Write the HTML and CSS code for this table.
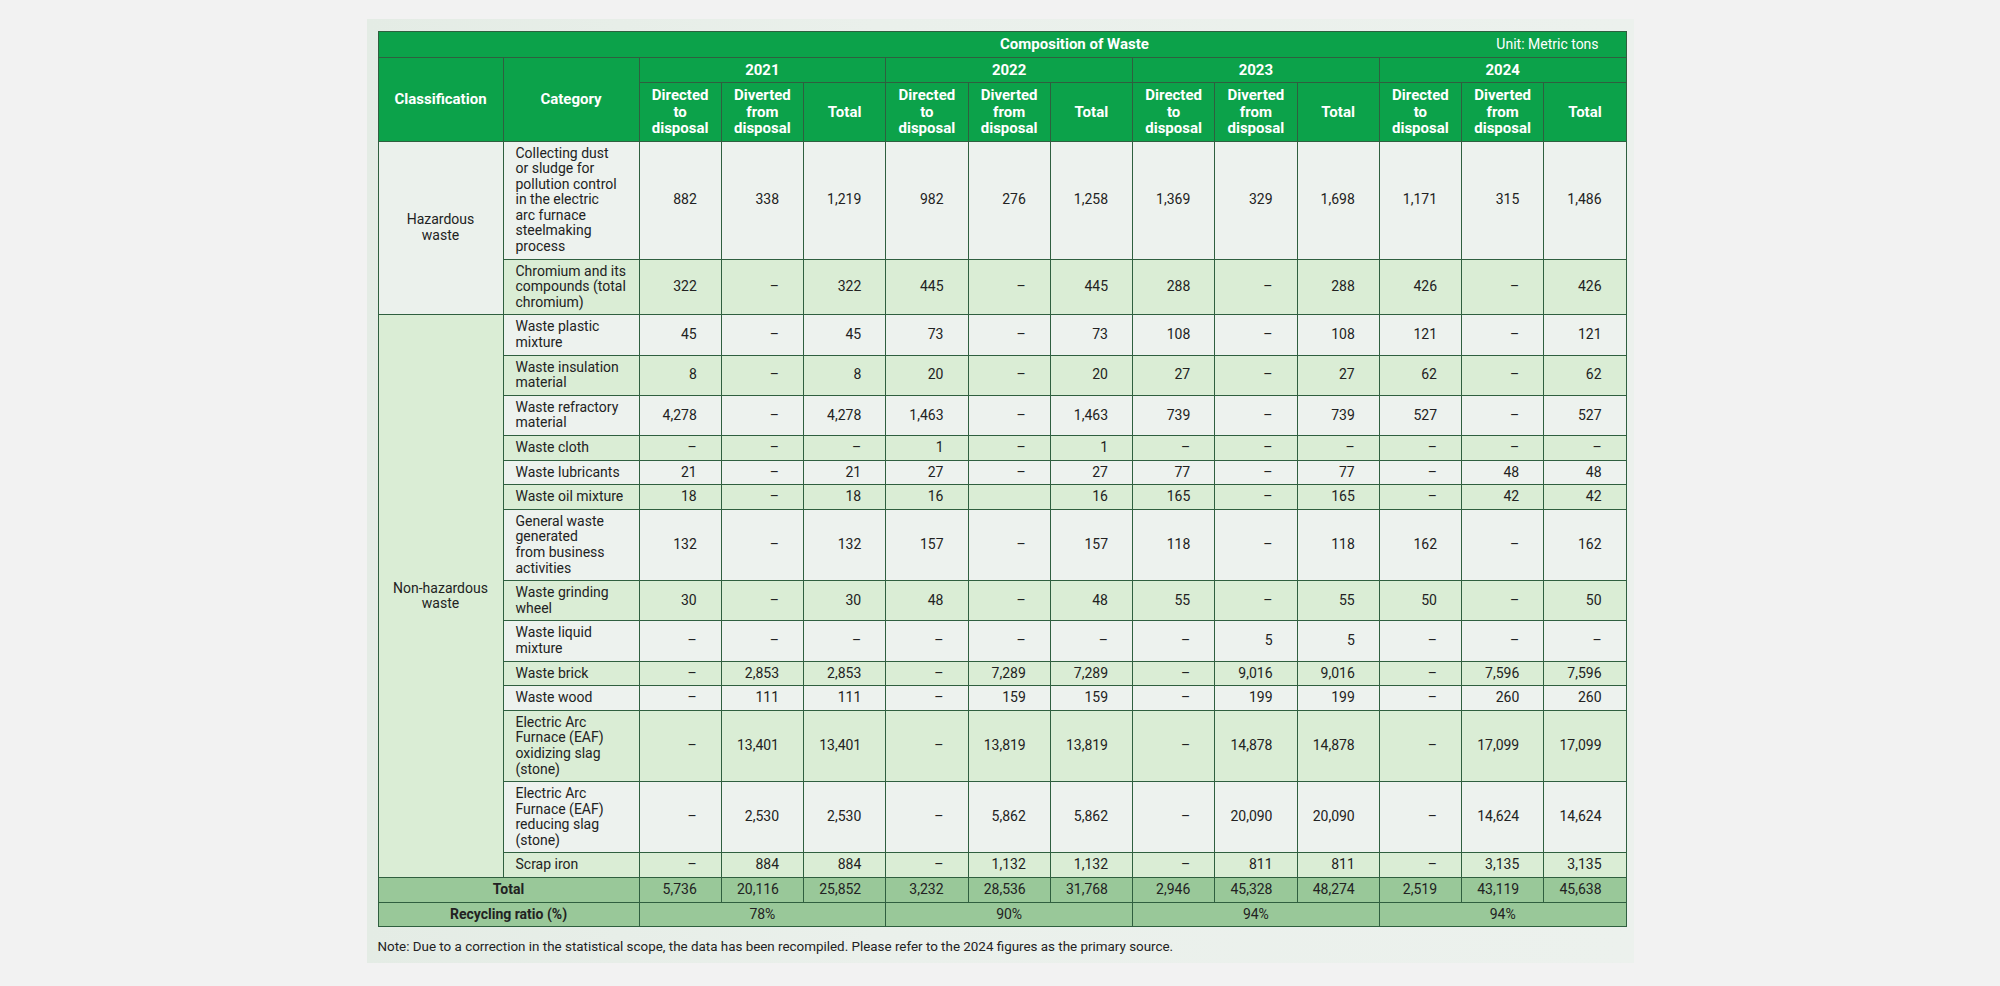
FILE: index.html
```html
<!DOCTYPE html>
<html lang="en">
<head>
<meta charset="utf-8">
<title>Composition of Waste</title>
<link rel="stylesheet" href="styles.css">
</head>
<body>
<div class="panel">
<table class="waste">
<colgroup>
<col class="c-class"><col class="c-cat">
<col class="c-num"><col class="c-num"><col class="c-num">
<col class="c-num"><col class="c-num"><col class="c-num">
<col class="c-num"><col class="c-num"><col class="c-num">
<col class="c-num"><col class="c-num"><col class="c-num">
</colgroup>
<thead>
<tr><th colspan="14" class="title-cell"><div class="title-bar"><span class="title">Composition of Waste</span><span class="unit">Unit: Metric tons</span></div></th></tr>
<tr>
<th rowspan="2">Classification</th>
<th rowspan="2">Category</th>
<th colspan="3">2021</th><th colspan="3">2022</th><th colspan="3">2023</th><th colspan="3">2024</th>
</tr>
<tr>
<th>Directed<br>to<br>disposal</th><th>Diverted<br>from<br>disposal</th><th>Total</th>
<th>Directed<br>to<br>disposal</th><th>Diverted<br>from<br>disposal</th><th>Total</th>
<th>Directed<br>to<br>disposal</th><th>Diverted<br>from<br>disposal</th><th>Total</th>
<th>Directed<br>to<br>disposal</th><th>Diverted<br>from<br>disposal</th><th>Total</th>
</tr>
</thead>
<tbody>
<tr class="lt">
<td rowspan="2" class="cls lt">Hazardous<br>waste</td>
<td class="cat">Collecting dust<br>or sludge for<br>pollution control<br>in the electric<br>arc furnace<br>steelmaking<br>process</td>
<td>882</td><td>338</td><td>1,219</td><td>982</td><td>276</td><td>1,258</td><td>1,369</td><td>329</td><td>1,698</td><td>1,171</td><td>315</td><td>1,486</td>
</tr>
<tr class="gr">
<td class="cat">Chromium and its<br>compounds (total<br>chromium)</td>
<td>322</td><td>–</td><td>322</td><td>445</td><td>–</td><td>445</td><td>288</td><td>–</td><td>288</td><td>426</td><td>–</td><td>426</td>
</tr>
<tr class="lt">
<td rowspan="14" class="cls gr">Non-hazardous<br>waste</td>
<td class="cat">Waste plastic<br>mixture</td>
<td>45</td><td>–</td><td>45</td><td>73</td><td>–</td><td>73</td><td>108</td><td>–</td><td>108</td><td>121</td><td>–</td><td>121</td>
</tr>
<tr class="gr">
<td class="cat">Waste insulation<br>material</td>
<td>8</td><td>–</td><td>8</td><td>20</td><td>–</td><td>20</td><td>27</td><td>–</td><td>27</td><td>62</td><td>–</td><td>62</td>
</tr>
<tr class="lt">
<td class="cat">Waste refractory<br>material</td>
<td>4,278</td><td>–</td><td>4,278</td><td>1,463</td><td>–</td><td>1,463</td><td>739</td><td>–</td><td>739</td><td>527</td><td>–</td><td>527</td>
</tr>
<tr class="gr">
<td class="cat">Waste cloth</td>
<td>–</td><td>–</td><td>–</td><td>1</td><td>–</td><td>1</td><td>–</td><td>–</td><td>–</td><td>–</td><td>–</td><td>–</td>
</tr>
<tr class="lt">
<td class="cat">Waste lubricants</td>
<td>21</td><td>–</td><td>21</td><td>27</td><td>–</td><td>27</td><td>77</td><td>–</td><td>77</td><td>–</td><td>48</td><td>48</td>
</tr>
<tr class="gr">
<td class="cat">Waste oil mixture</td>
<td>18</td><td>–</td><td>18</td><td>16</td><td></td><td>16</td><td>165</td><td>–</td><td>165</td><td>–</td><td>42</td><td>42</td>
</tr>
<tr class="lt">
<td class="cat">General waste<br>generated<br>from business<br>activities</td>
<td>132</td><td>–</td><td>132</td><td>157</td><td>–</td><td>157</td><td>118</td><td>–</td><td>118</td><td>162</td><td>–</td><td>162</td>
</tr>
<tr class="gr">
<td class="cat">Waste grinding<br>wheel</td>
<td>30</td><td>–</td><td>30</td><td>48</td><td>–</td><td>48</td><td>55</td><td>–</td><td>55</td><td>50</td><td>–</td><td>50</td>
</tr>
<tr class="lt">
<td class="cat">Waste liquid<br>mixture</td>
<td>–</td><td>–</td><td>–</td><td>–</td><td>–</td><td>–</td><td>–</td><td>5</td><td>5</td><td>–</td><td>–</td><td>–</td>
</tr>
<tr class="gr">
<td class="cat">Waste brick</td>
<td>–</td><td>2,853</td><td>2,853</td><td>–</td><td>7,289</td><td>7,289</td><td>–</td><td>9,016</td><td>9,016</td><td>–</td><td>7,596</td><td>7,596</td>
</tr>
<tr class="lt">
<td class="cat">Waste wood</td>
<td>–</td><td>111</td><td>111</td><td>–</td><td>159</td><td>159</td><td>–</td><td>199</td><td>199</td><td>–</td><td>260</td><td>260</td>
</tr>
<tr class="gr">
<td class="cat">Electric Arc<br>Furnace (EAF)<br>oxidizing slag<br>(stone)</td>
<td>–</td><td>13,401</td><td>13,401</td><td>–</td><td>13,819</td><td>13,819</td><td>–</td><td>14,878</td><td>14,878</td><td>–</td><td>17,099</td><td>17,099</td>
</tr>
<tr class="lt">
<td class="cat">Electric Arc<br>Furnace (EAF)<br>reducing slag<br>(stone)</td>
<td>–</td><td>2,530</td><td>2,530</td><td>–</td><td>5,862</td><td>5,862</td><td>–</td><td>20,090</td><td>20,090</td><td>–</td><td>14,624</td><td>14,624</td>
</tr>
<tr class="gr">
<td class="cat">Scrap iron</td>
<td>–</td><td>884</td><td>884</td><td>–</td><td>1,132</td><td>1,132</td><td>–</td><td>811</td><td>811</td><td>–</td><td>3,135</td><td>3,135</td>
</tr>
</tbody>
<tfoot>
<tr class="sum">
<th colspan="2">Total</th>
<td>5,736</td><td>20,116</td><td>25,852</td><td>3,232</td><td>28,536</td><td>31,768</td><td>2,946</td><td>45,328</td><td>48,274</td><td>2,519</td><td>43,119</td><td>45,638</td>
</tr>
<tr class="sum">
<th colspan="2">Recycling ratio (%)</th>
<td colspan="3" class="ctr">78%</td><td colspan="3" class="ctr">90%</td><td colspan="3" class="ctr">94%</td><td colspan="3" class="ctr">94%</td>
</tr>
</tfoot>
</table>
<p class="note">Note: Due to a correction in the statistical scope, the data has been recompiled. Please refer to the 2024 figures as the primary source.</p>
</div>
</body>
</html>
```
FILE: styles.css
```css
html, body {
  margin: 0;
  padding: 0;
  background: #f2f2f2;
  font-family: Roboto, "Noto Sans", "Liberation Sans", sans-serif;
  color: #222222;
}

.panel {
  width: 1248px;
  margin: 19px auto 0;
  padding: 12px 8px 8px 11px;
  background: linear-gradient(90deg, #e4ece5 0%, #eaf0eb 40%, #ecf1ed 100%);
}

.waste {
  width: 1248px;
  table-layout: fixed;
  border-collapse: collapse;
  font-size: 14px;
}

.c-class { width: 125px; }
.c-cat { width: 136px; }
.c-num { width: 82.25px; }

.waste th,
.waste td {
  border: 1px solid #2f5f3f;
}

.waste thead th {
  background: #0ca24a;
  color: #ffffff;
  font-weight: 700;
  font-size: 15px;
  line-height: 16.5px;
  padding: 4px 4px;
  text-align: center;
  vertical-align: middle;
}

.waste thead .title-cell {
  padding: 4px 27px 4px 12px;
}

.title-bar {
  display: flex;
  align-items: center;
}

.title {
  flex: 1;
  text-align: center;
  padding-left: 262px;
}

.unit {
  font-weight: 400;
  font-size: 14px;
}

.waste tbody td {
  line-height: 15.6px;
  padding: 4px 24px 4px 12px;
  text-align: right;
  vertical-align: middle;
  white-space: nowrap;
}

.waste tbody td.cat {
  text-align: left;
  padding-left: 12px;
  padding-right: 4px;
}

.waste tbody td.cls {
  text-align: center;
  padding: 4px 4px;
}

.lt, .lt td { background: #edf2ee; }
.gr, .gr td { background: #daedd5; }
.waste tbody td.cls.lt { background: #ebf1ec; }
.waste tbody td.cls.gr { background: #daedd5; }

.sum th,
.sum td {
  background: #99c899;
  line-height: 15.6px;
  padding: 4px 24px 4px 12px;
  text-align: right;
  vertical-align: middle;
}

.sum th {
  text-align: center;
  font-weight: 700;
  padding: 4px;
}

.sum td.ctr {
  text-align: center;
  padding: 4px;
}

.note {
  margin: 12px 0 0;
  font-size: 13.4px;
  line-height: 16px;
  color: #222222;
}
```
